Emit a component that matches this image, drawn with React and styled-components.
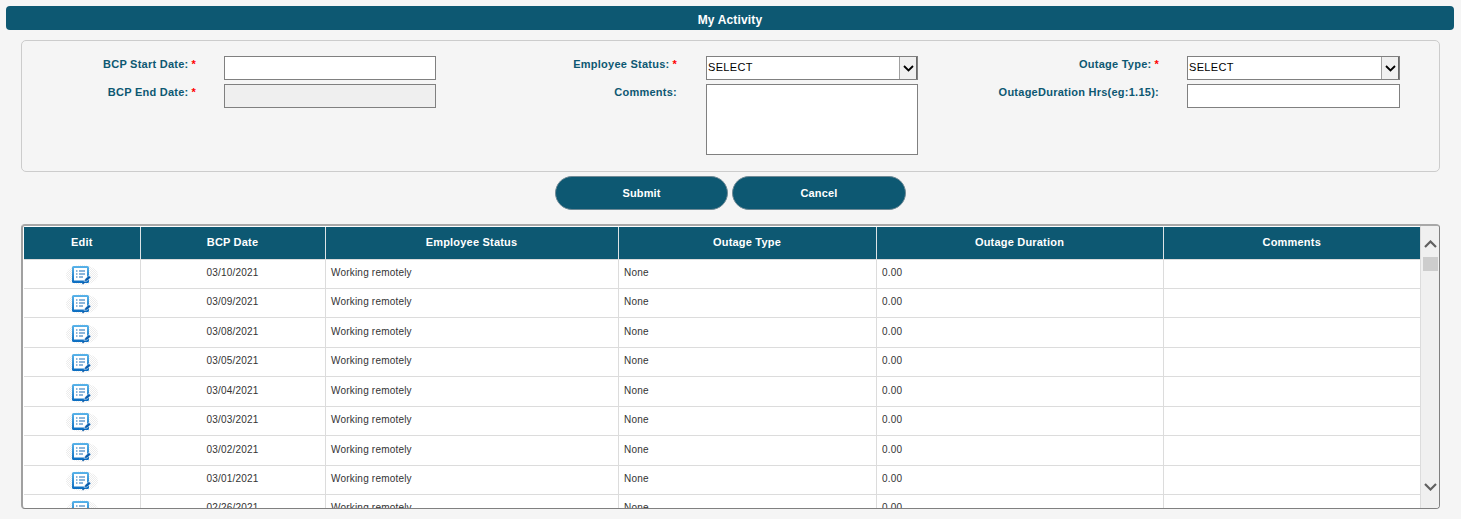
import styled, { createGlobalStyle } from 'styled-components';

const teal = '#0d5872';

const GlobalStyle = createGlobalStyle`
  html, body {
    margin: 0;
    padding: 0;
    background: #f5f5f5;
    font-family: "Liberation Sans", Arial, sans-serif;
    overflow: hidden;
  }
`;

const Page = styled.div`
  width: 1461px;
  height: 519px;
  padding: 6px 7px 0 6px;
  box-sizing: border-box;
`;

const TitleBar = styled.div`
  height: 24px;
  background: ${teal};
  border-radius: 4px;
  color: #fff;
  font-size: 12px;
  font-weight: bold;
  letter-spacing: 0.15px;
  line-height: 28px;
  text-align: center;
`;

const FormPanel = styled.div`
  margin: 10px 14px 0 15px;
  height: 132px;
  box-sizing: border-box;
  border: 1px solid #ccc;
  border-radius: 5px;
  padding: 15px 0 0 0;
  display: grid;
  grid-template-columns: 481px 481px 1fr;
`;

const FormColumn = styled.div`
  display: grid;
  grid-template-columns: ${props => props.$labelWidth}px ${props => props.$fieldWidth}px;
  column-gap: ${props => props.$gap}px;
  grid-auto-rows: min-content;
  row-gap: 4px;
`;

const Label = styled.label`
  color: ${teal};
  font-size: 11px;
  font-weight: bold;
  letter-spacing: 0.25px;
  text-align: right;
  line-height: 15px;
  padding-top: 1px;
  white-space: nowrap;
`;

const Required = styled.span`
  color: #f00;
  margin-left: 3px;
`;

const TextInput = styled.input`
  box-sizing: border-box;
  width: 100%;
  height: 24px;
  border: 1px solid #808080;
  background: ${props => props.disabled ? '#efefef' : '#fff'};
  padding: 0 2px;
  margin: 0;
  border-radius: 0;
  outline: none;
`;

const CommentBox = styled.textarea`
  box-sizing: border-box;
  width: 100%;
  height: 71px;
  border: 1px solid #808080;
  background: #fff;
  padding: 2px;
  margin: 0;
  border-radius: 0;
  resize: none;
  outline: none;
`;

const SelectBox = styled.div`
  box-sizing: border-box;
  width: 100%;
  height: 24px;
  border: 1px solid #808080;
  background: #fff;
  display: flex;
  align-items: center;
  font-size: 11px;
  color: #000;
  padding: 0 0 2px 1px;
  letter-spacing: 0.35px;
`;

const SelectValue = styled.span`
  flex: 1;
`;

const SelectArrow = styled.span`
  width: 18px;
  height: 22px;
  margin-bottom: -2px;
  box-sizing: border-box;
  background: #f0f0f0;
  border-left: 1px solid #a0a0a0;
  border-right: 1px solid #696969;
  display: flex;
  align-items: center;
  justify-content: center;
`;

const ButtonRow = styled.div`
  display: flex;
  gap: 4px;
  margin: 4px 0 0 549px;
`;

const PillButton = styled.button`
  width: ${props => props.$width}px;
  height: 34px;
  border: 1px solid #6f8a96;
  border-radius: 17px;
  background: ${teal};
  color: #fff;
  font-family: inherit;
  font-size: 11px;
  font-weight: bold;
  letter-spacing: 0.15px;
  padding: 0;
`;

const TableFrame = styled.div`
  margin: 14px 14px 0 15px;
  height: 285px;
  box-sizing: border-box;
  border-top: 2px solid #a8a8a8;
  border-left: 2px solid #a0a0a0;
  border-right: 1px solid #808080;
  border-bottom: 1px solid #808080;
  border-radius: 4px;
  background: #fff;
  display: flex;
  overflow: hidden;
`;

const TableScroll = styled.div`
  width: 1397px;
  padding: 1px 0 0 1px;
  box-sizing: border-box;
  overflow: hidden;
`;

const Grid = styled.table`
  width: 1396px;
  table-layout: fixed;
  border-collapse: collapse;
`;

const HeadCell = styled.th`
  height: 32px;
  padding: 0 0 2px 0;
  box-sizing: border-box;
  background: ${teal};
  color: #fff;
  font-size: 11px;
  font-weight: bold;
  letter-spacing: 0.2px;
  text-align: center;
  border-left: 1px solid #dce3e6;
  border-bottom: 1px solid #dcdcdc;
  &:first-child {
    border-left: none;
  }
`;

const Row = styled.tr`
  height: 29.47px;
`;

const Cell = styled.td`
  padding: 0 0 3px ${props => props.$center ? 0 : 5.5}px;
  font-size: 10px;
  letter-spacing: 0.2px;
  color: #333;
  text-align: ${props => props.$center ? 'center' : 'left'};
  border-left: 1px solid #dcdcdc;
  border-bottom: 1px solid #dcdcdc;
  white-space: nowrap;
  &:first-child {
    border-left: none;
    padding: 0;
  }
`;

const IconWrap = styled.span`
  display: flex;
  justify-content: center;
  padding-top: 2px;
`;

const ScrollTrack = styled.div`
  width: 19px;
  flex: none;
  background: #f0f0f0;
  border-left: 1px solid #dcdcdc;
  box-sizing: border-box;
  display: flex;
  flex-direction: column;
  align-items: center;
  padding-top: 14px;
`;

const ScrollThumb = styled.div`
  width: 15px;
  height: 14px;
  margin-top: 9px;
  background: #cdcdcd;
`;

const ScrollSpacer = styled.div`
  flex: 1;
`;

const ScrollChevron = styled.svg`
  display: block;
  margin-bottom: ${props => props.$bottom || 0}px;
`;

const columns = [116, 185, 293, 258, 287, 257];
const headers = ['Edit', 'BCP Date', 'Employee Status', 'Outage Type', 'Outage Duration', 'Comments'];
const dates = [
  '03/10/2021', '03/09/2021', '03/08/2021', '03/05/2021', '03/04/2021',
  '03/03/2021', '03/02/2021', '03/01/2021', '02/26/2021',
];

const EditIcon = () => (
  <svg width="32" height="20" viewBox="0 0 32 20">
    <defs>
      <pattern id="halo" width="2" height="2" patternUnits="userSpaceOnUse">
        <rect width="1" height="1" fill="#ececec" />
        <rect x="1" y="1" width="1" height="1" fill="#ececec" />
      </pattern>
      <linearGradient id="sheet" x1="0" y1="0" x2="0" y2="1">
        <stop offset="0" stopColor="#5ab4ea" />
        <stop offset="1" stopColor="#0a6cc0" />
      </linearGradient>
    </defs>
    <ellipse cx="16" cy="10" rx="16" ry="10" fill="url(#halo)" />
    <rect x="6" y="1" width="17" height="17" rx="1.5" fill="url(#sheet)" />
    <rect x="8" y="3" width="13" height="12.5" fill="#fff" />
    <path d="M10 6h1.5M13 6h6M10 9h1.5M13 9h6M10 12h1.5M13 12h4" stroke="#1a6db5" strokeWidth="1" />
    <path d="M18 16.5l1-2.5 4-3.5 2 2-4 3.5z" fill="#0b5cab" stroke="#fff" strokeWidth="0.5" />
    <path d="M16.5 19l2-2" stroke="#0b5cab" strokeWidth="1.2" />
  </svg>
);

const Chevron = ({ up, bottom }) => (
  <ScrollChevron $bottom={bottom} width="13" height="8" viewBox="0 0 13 8">
    <path d={up ? 'M1 7l5.5-5.5L12 7' : 'M1 1l5.5 5.5L12 1'} fill="none" stroke="#606060" strokeWidth="2.2" />
  </ScrollChevron>
);

const Select = () => (
  <SelectBox>
    <SelectValue>SELECT</SelectValue>
    <SelectArrow>
      <svg width="11" height="7" viewBox="0 0 11 7">
        <path d="M1 1l4.5 4.5L10 1" fill="none" stroke="#000" strokeWidth="1.8" />
      </svg>
    </SelectArrow>
  </SelectBox>
);

const FieldLabel = ({ text, required }) => (
  <Label>
    {text}
    {required && <Required>*</Required>}
  </Label>
);

export default function App() {
  return (
    <Page>
      <GlobalStyle />
      <TitleBar>My Activity</TitleBar>
      <FormPanel>
        <FormColumn $labelWidth={174} $gap={28} $fieldWidth={212}>
          <FieldLabel text="BCP Start Date:" required />
          <TextInput />
          <FieldLabel text="BCP End Date:" required />
          <TextInput disabled />
        </FormColumn>
        <FormColumn $labelWidth={174} $gap={29} $fieldWidth={212}>
          <FieldLabel text="Employee Status:" required />
          <Select />
          <FieldLabel text="Comments:" />
          <CommentBox />
        </FormColumn>
        <FormColumn $labelWidth={175} $gap={28} $fieldWidth={213}>
          <FieldLabel text="Outage Type:" required />
          <Select />
          <FieldLabel text="OutageDuration Hrs(eg:1.15):" />
          <TextInput />
        </FormColumn>
      </FormPanel>
      <ButtonRow>
        <PillButton $width={173}>Submit</PillButton>
        <PillButton $width={174}>Cancel</PillButton>
      </ButtonRow>
      <TableFrame>
        <TableScroll>
          <Grid>
            <colgroup>
              {columns.map((w, i) => <col key={i} style={{ width: w }} />)}
            </colgroup>
            <thead>
              <tr>
                {headers.map(h => <HeadCell key={h}>{h}</HeadCell>)}
              </tr>
            </thead>
            <tbody>
              {dates.map(date => (
                <Row key={date}>
                  <Cell><IconWrap><EditIcon /></IconWrap></Cell>
                  <Cell $center>{date}</Cell>
                  <Cell>Working remotely</Cell>
                  <Cell>None</Cell>
                  <Cell>0.00</Cell>
                  <Cell></Cell>
                </Row>
              ))}
            </tbody>
          </Grid>
        </TableScroll>
        <ScrollTrack>
          <Chevron up />
          <ScrollThumb />
          <ScrollSpacer />
          <Chevron bottom={17} />
        </ScrollTrack>
      </TableFrame>
    </Page>
  );
}
